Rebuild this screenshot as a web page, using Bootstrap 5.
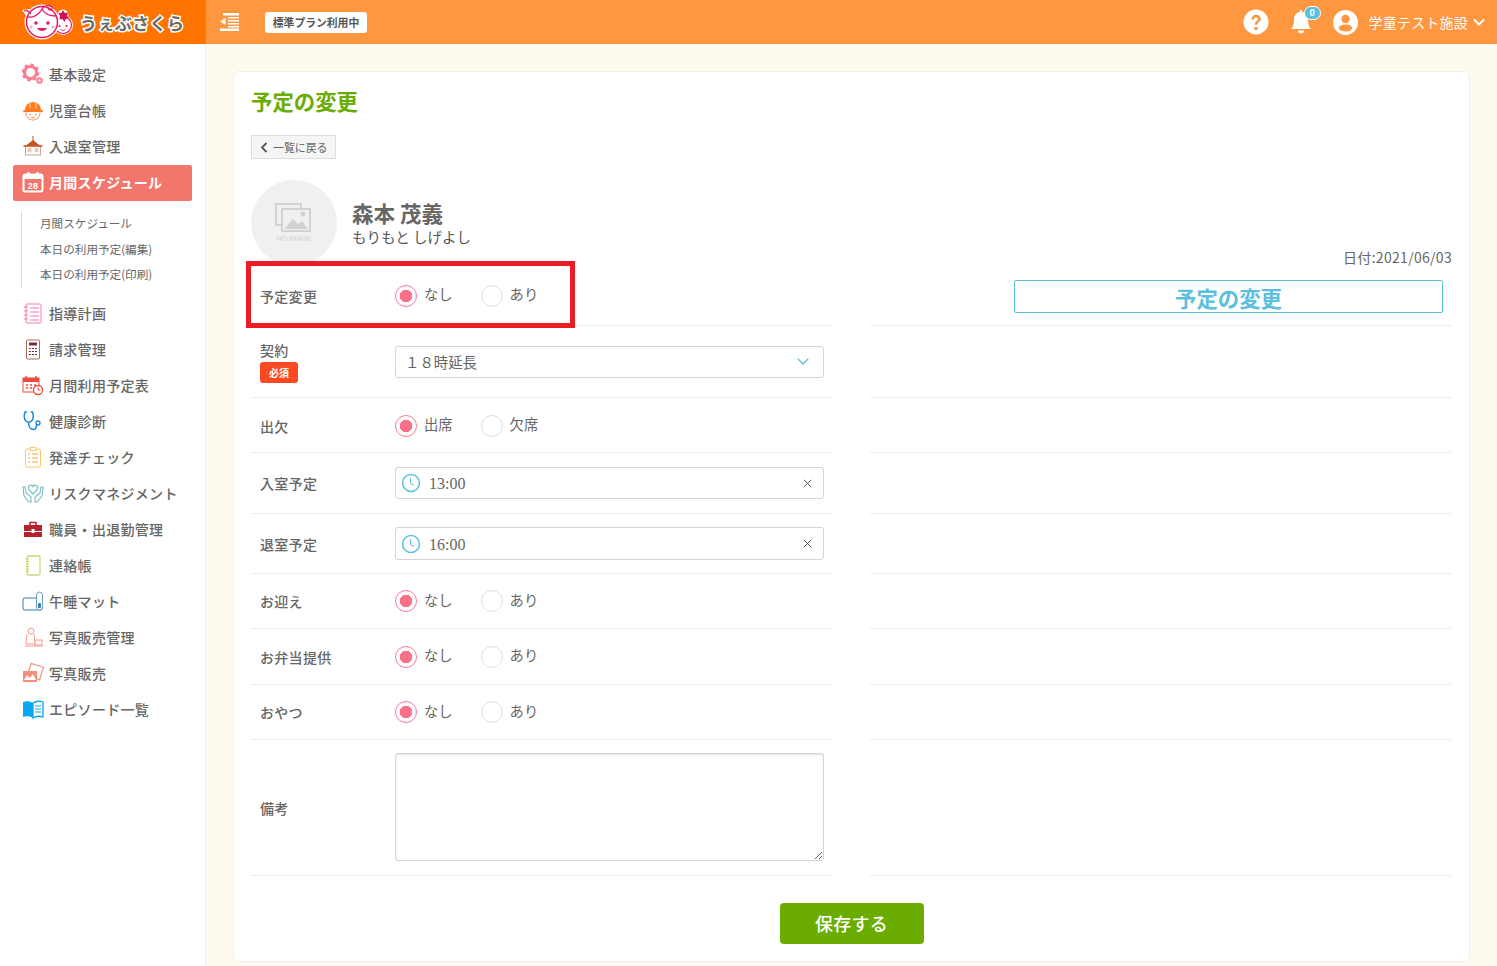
<!DOCTYPE html>
<html lang="ja">
<head>
<meta charset="utf-8">
<title>予定の変更</title>
<link href="https://cdn.jsdelivr.net/npm/bootstrap@5.3.0/dist/css/bootstrap.min.css" rel="stylesheet">
<style>
html,body{height:966px;overflow:hidden}
body{font-family:"Noto Sans CJK JP","Noto Sans",sans-serif;color:#666;background:#fffaf0;font-size:14px}
.app-top{height:44px;background:#ff9640}
.logo-box{width:206px;height:44px;background:#ff7300;padding-left:21px;gap:5px;flex:none}
.logo-text{color:#6b6b6b;font-size:17px;font-weight:700;letter-spacing:.4px;-webkit-text-stroke:3px #fff;paint-order:stroke fill;line-height:1}
.menu-tog{margin-left:14px;margin-right:26px;line-height:0}
.plan-tag{background:#fff;color:#555;font-size:10.800px;font-weight:700;border-radius:3px;height:21px;width:102px;line-height:21px;text-align:center;white-space:nowrap}
.top-user{color:#fff;font-size:14px;letter-spacing:.2px;margin-right:12px}
.bell-wrap{position:relative;width:24px;height:26px;margin:0 19px 0 21px}
.bell-num{position:absolute;left:14px;top:-3px;width:17px;height:14px;border-radius:7px;background:#5bc0de;border:1px solid #fff;color:#fff;font-size:9px;line-height:12px;text-align:center;font-weight:700;letter-spacing:0}
.user-ic{margin-right:11px}
.chev-ic{margin-left:5px}
.app-main{height:922px}
.side-nav{width:206px;background:#fff;border-right:1px solid #eee;padding:12px 13px 0 13px;flex:none}
.side-item{height:36px;color:#666;font-size:14px;letter-spacing:.3px;font-weight:500;gap:5px;padding-left:9px;white-space:nowrap}
.side-item svg{width:22px;height:22px;flex:none}
.side-item.is-on{background:#f2766b;color:#fff;font-weight:700;border-radius:2px;margin-top:1px;margin-bottom:-1px;padding-bottom:2px}
.side-sub{margin:11px 0 7px 8px;border-left:1px solid #ddd;padding-left:18px;font-size:11.600px;color:#666;height:77px}
.side-sub div{height:25.500px;line-height:25.500px;white-space:nowrap}
.body-wrap{padding:27px 27px 0 27px}
.sheet{background:#fff;border:1px solid #f3efe8;border-radius:6px;height:891px;padding:0 17px;position:relative}
.sheet-title{color:#6aad00;font-size:21.400px;font-weight:700;line-height:30px;margin:14px 0 19px;height:30px}
.back-btn{width:85px;height:24px;background:#f5f5f5;border:1px solid #ddd;color:#666;font-size:10.900px;gap:5px;padding-left:8px;line-height:1}
.face-row{height:86px;margin-top:21px;gap:15px}
.face{width:86px;height:86px;border-radius:50%;background:#f0f0f0;flex:none}
.pname{font-size:21.500px;font-weight:700;line-height:26px;color:#666;margin-bottom:2px}
.pkana{font-size:14.500px;line-height:18px;color:#555}
.date-line{font-size:14px;letter-spacing:.3px;text-align:right;height:24px;line-height:21px;margin-top:-19px;color:#666}
.rows{column-gap:37px;display:grid;grid-template-columns:582px 582px}
.rowc{border-bottom:1px solid #eee}
.lbl{width:144px;padding-left:9px;flex:none;font-size:14px;letter-spacing:.3px;color:#666;font-weight:500;line-height:18px}
.h55{height:55px}.h72{height:72px}.h61{height:61px}.h60{height:60px}.h56{height:56px}.h136{height:136px}
.pb-up{padding-bottom:5px}.pt-dn{padding-top:1px}
.req{display:block;background:#fa4a23;color:#fff;font-size:10px;font-weight:700;width:38px;height:21px;line-height:21px;text-align:center;border-radius:3px;margin-top:3px;letter-spacing:0}
.rad{gap:7px;margin-right:28px;line-height:1;font-size:14.300px}
.rad i{display:block;width:22px;height:22px;border-radius:50%;border:1px solid #ddd;background:#fff}
.rad.on i{border-color:#fb7b93;background:radial-gradient(circle,#fb7089 0 6px,#fff 6.500px)}
.rad span{padding-bottom:2px}
.fld{width:429px;height:32px;border:1px solid #d5d5d5;border-radius:3px;background:#fff}
.fld.tall{height:33px}
.sel-txt{padding-left:9px;font-size:14.400px;color:#666}
.clock-ic{margin-left:5px;flex:none}
.x-ic{margin-left:auto;margin-right:11px}
.time-txt{font-family:"Liberation Serif",serif;font-size:16px;color:#666;margin-left:8px;padding-top:2px}
.memo{width:429px;height:108px;border:1px solid #d5d5d5;border-radius:3px;resize:both;display:block;outline:0;box-shadow:inset 0 1px 2px rgba(0,0,0,.12);margin-bottom:2px}
.title-box{width:429px;height:33px;margin-left:144px;border:1px solid #5bc0de;border-radius:2px;color:#5bc0de;font-size:21.400px;font-weight:700;text-align:center;line-height:33px;margin-top:-3px}
.save-wrap{padding-top:27px}
.save-btn{width:144px;height:41px;background:#6aad00;color:#fff;font-size:18px;font-weight:500;border:0;border-radius:4px;line-height:41px;padding:0;letter-spacing:.3px}
.save-btn:hover{background:#6aad00;color:#fff}
.chev-sel{margin-right:14px;flex:none}
.red-mark{position:absolute;left:12px;top:189px;width:329px;height:67px;border:5px solid #ed1c24;pointer-events:none}
</style>
</head>
<body>
<header class="app-top d-flex align-items-center">
  <div class="logo-box d-flex align-items-center">
    <svg width="54" height="40" viewBox="0 0 54 40" class="flex-none">
      <circle cx="42" cy="23" r="10" fill="#fff"/>
      <circle cx="42" cy="23" r="8.500" fill="#fff" stroke="#e5186a" stroke-width="1.200"/>
      <circle cx="42" cy="13" r="5.500" fill="#fff"/>
      <path d="M42 8l1.700 2.900 3.300-.4-1 3.200 2 2.600-3.300.6-1.200 3-1.900-2.700-3.300.1.800-3.200-1.800-2.800 3.200-.5z" fill="#cf1450"/>
      <circle cx="21" cy="20" r="17.500" fill="#fff"/>
      <path d="M1 8l8-1 2 6-5 2z" fill="#fff"/>
      <circle cx="21" cy="20" r="15.500" fill="#fff" stroke="#e5186a" stroke-width="1.500"/>
      <path d="M6 15c6 1 12-2 15-8 2 4 7 7 14 7M3 9c3-1 5 0 7 3M21 7c3-5 11-4 10 0-1 2-4 1-4-1" fill="none" stroke="#e5186a" stroke-width="1.300"/>
      <circle cx="15" cy="21" r="1.800" fill="#e5186a"/><circle cx="27" cy="21" r="1.800" fill="#e5186a"/>
      <circle cx="10" cy="25" r="1.500" fill="#f7a8c4"/><circle cx="32" cy="25" r="1.500" fill="#f7a8c4"/>
      <path d="M16 26c2 4 8 4 10 0z" fill="#e5186a"/>
      <circle cx="38.500" cy="24" r="1.100" fill="#e5186a"/><circle cx="45.500" cy="24" r="1.100" fill="#e5186a"/>
      <path d="M39.500 27c1.500 2 3.500 2 5 0" fill="none" stroke="#e5186a"/>
    </svg>
    <span class="logo-text">うぇぶさくら</span>
  </div>
  <span class="menu-tog"><svg width="19" height="18" viewBox="0 0 19 18" fill="#fff"><rect y="0" x="3" width="16" height="2.500"/><rect x="8" y="4" width="11" height="1.500"/><rect x="8" y="7" width="11" height="1.500"/><rect x="8" y="10" width="11" height="1.500"/><rect x="8" y="13" width="11" height="1.500"/><rect x="0" y="15.500" width="19" height="2.500"/><path d="M5.500 5v7L0 8.500z"/></svg></span>
  <span class="plan-tag">標準プラン利用中</span>
  <span class="ms-auto d-flex align-items-center top-user">
    <svg width="26" height="26" viewBox="0 0 26 26"><circle cx="13" cy="13" r="12.500" fill="#fff"/><path d="M8.500 10.500c0-3 2-4.800 4.700-4.800s4.500 1.700 4.500 4.100c0 3.300-3.300 3.300-3.300 6h-2.600c0-4 3.100-3.800 3.100-5.900 0-1-.7-1.700-1.700-1.700s-1.900.8-2 2.300z" fill="#ff9640"/><circle cx="13" cy="19.500" r="1.800" fill="#ff9640"/></svg>
    <span class="bell-wrap"><svg width="24" height="26" viewBox="0 0 24 26" fill="#fff"><path d="M10 1h2v2c4 .6 6 3.500 6 7.500 0 5 1 7.500 3 9.500H1c2-2 3-4.500 3-9.500 0-4 2-6.900 6-7.500z"/><path d="M8 21.500h6c0 2-1.200 3-3 3s-3-1-3-3z"/></svg><span class="bell-num">0</span></span>
    <svg width="25" height="25" viewBox="0 0 25 25" class="flex-none user-ic"><circle cx="12.500" cy="12.500" r="12.500" fill="#fff"/><circle cx="12.500" cy="9" r="4.200" fill="#ff9640"/><ellipse cx="12.500" cy="18" rx="6.800" ry="3.500" fill="#ff9640"/></svg>
    <span>学童テスト施設</span>
    <svg width="12" height="8" viewBox="0 0 12 8" class="chev-ic"><path d="M1 1.500l5 5 5-5" fill="none" stroke="#fff" stroke-width="2"/></svg>
  </span>
</header>
<div class="app-main d-flex">
  <nav class="side-nav">
    <div class="side-item d-flex align-items-center"><svg viewBox="0 0 22 22"><circle cx="8.500" cy="9.500" r="6" fill="none" stroke="#fb7b93" stroke-width="3"/><circle cx="8.500" cy="9.500" r="7.700" fill="none" stroke="#fb7b93" stroke-width="2.400" stroke-dasharray="3.200 2.800"/><circle cx="17.500" cy="17.500" r="2.300" fill="none" stroke="#fb7b93" stroke-width="2"/></svg>基本設定</div>
    <div class="side-item d-flex align-items-center"><svg viewBox="0 0 22 22"><path d="M3 11a8 8 0 0 1 16 0z" fill="#ff7d1e"/><rect x="1" y="11" width="20" height="2" rx="1" fill="#ff7d1e"/><path d="M8 3.500v6M14 3.500v6" stroke="#fff" stroke-width=".7"/><path d="M4 13c0 5 3 8 7 8s7-3 7-8" fill="#fff" stroke="#ff8c4a"/><path d="M7 15.500h2M13 15.500h2M9 18c1 1 3 1 4 0" stroke="#ff8c4a" fill="none"/></svg>児童台帳</div>
    <div class="side-item d-flex align-items-center"><svg viewBox="0 0 22 22"><path d="M11 1v5" stroke="#c8501e"/><path d="M3 11l3-2 5-4 5 4 3 2z" fill="#c8501e"/><rect x="3.500" y="11" width="15" height="9" fill="#fff" stroke="#c9a79a"/><path d="M1.500 11h19" stroke="#c8501e" stroke-width="1.500"/><rect x="5.500" y="13" width="4" height="4" fill="#f2c8b8"/><rect x="12.500" y="13" width="4" height="4" fill="#f2c8b8"/></svg>入退室管理</div>
    <div class="side-item is-on d-flex align-items-center"><svg viewBox="0 0 22 22"><rect x="1.500" y="3.500" width="19" height="17" rx="2" fill="none" stroke="#fff" stroke-width="2"/><rect x="2" y="4" width="18" height="4" fill="#fff"/><rect x="5.500" y="1" width="2" height="5" fill="#fff"/><rect x="14.500" y="1" width="2" height="5" fill="#fff"/><text x="11" y="18" text-anchor="middle" font-size="9" font-weight="700" fill="#fff" font-family="Liberation Sans">28</text></svg>月間スケジュール</div>
    <div class="side-sub"><div>月間スケジュール</div><div>本日の利用予定(編集)</div><div>本日の利用予定(印刷)</div></div>
    <div class="side-item d-flex align-items-center"><svg viewBox="0 0 22 22"><rect x="4" y="2" width="15" height="19" rx="1" fill="#fff" stroke="#fb7bb0"/><path d="M2 5h4M2 9h4M2 13h4M2 17h4M8 6h9M8 10h9M8 14h9M8 18h9" stroke="#fb7bb0"/></svg>指導計画</div>
    <div class="side-item d-flex align-items-center"><svg viewBox="0 0 22 22"><rect x="4.500" y="2" width="13" height="19" rx="1" fill="#fff" stroke="#a86f5c"/><rect x="7" y="4.500" width="8" height="3" fill="#7d2a45"/><path d="M7 10.500h2M10 10.500h2M13 10.500h2M7 13.500h2M10 13.500h2M13 13.500h2M7 16.500h2M10 16.500h2M13 16.500h2" stroke="#7d2a45"/></svg>請求管理</div>
    <div class="side-item d-flex align-items-center"><svg viewBox="0 0 22 22"><rect x="1" y="4" width="16" height="14" fill="#fff" stroke="#ef4b3c"/><rect x="1" y="4" width="16" height="4" fill="#ef4b3c"/><path d="M4 2v3M14 2v3M4 11h2M8 11h2M12 11h2M4 14h2M8 14h2" stroke="#ef4b3c" stroke-width="1.500"/><circle cx="16" cy="16" r="4.500" fill="#fff" stroke="#ef4b3c" stroke-width="1.300"/><path d="M16 13.500V16h2.500" fill="none" stroke="#ef4b3c"/></svg>月間利用予定表</div>
    <div class="side-item d-flex align-items-center"><svg viewBox="0 0 22 22"><path d="M5 2H3c-1 3-1 7 1 9 1.500 1.500 4 1.500 5.500 0 2-2 2-6 1-9H8.500M6.500 12.500c0 4 2 7 5 7s3-3 3-5" fill="none" stroke="#1e88d2" stroke-width="1.500"/><circle cx="16" cy="13" r="2" fill="none" stroke="#1e88d2" stroke-width="1.300"/></svg>健康診断</div>
    <div class="side-item d-flex align-items-center"><svg viewBox="0 0 22 22"><rect x="3.500" y="3" width="15" height="18" rx="1.500" fill="#fff" stroke="#ffc864"/><rect x="8" y="1.500" width="6" height="3" fill="#fff" stroke="#ffc864"/><path d="M6 8h2M10 8h6M6 12h2M10 12h6M6 16h2M10 16h6" stroke="#f0a63c"/></svg>発達チェック</div>
    <div class="side-item d-flex align-items-center"><svg viewBox="0 0 22 22"><path d="M11 12C8 9 6.500 8 6.500 6A2.300 2.300 0 0 1 11 5a2.300 2.300 0 0 1 4.500 1c0 2-1.500 3-4.500 6z" fill="none" stroke="#6fc8b4" stroke-width="1.200"/><path d="M1 5l1 9 5 6h2v-5l-5-4-1-6zM21 5l-1 9-5 6h-2v-5l5-4 1-6z" fill="#fff" stroke="#7ab9c9" stroke-width="1.100"/></svg>リスクマネジメント</div>
    <div class="side-item d-flex align-items-center"><svg viewBox="0 0 22 22"><path d="M8 7V4.500h6V7" fill="none" stroke="#b5202a" stroke-width="1.500"/><rect x="2" y="7" width="18" height="6" fill="#b5202a"/><rect x="2" y="14" width="18" height="5" fill="#b5202a"/><rect x="9.500" y="11" width="3" height="4" fill="#fff"/></svg>職員・出退勤管理</div>
    <div class="side-item d-flex align-items-center"><svg viewBox="0 0 22 22"><rect x="5" y="2" width="13" height="19" rx="1.500" fill="#fff" stroke="#c5dc78" stroke-width="1.300"/><path d="M4 5h3M4 7.500h3M4 10h3M4 12.500h3M4 15h3M4 17.500h3" stroke="#c5dc78"/></svg>連絡帳</div>
    <div class="side-item d-flex align-items-center"><svg viewBox="0 0 22 22"><rect x="1" y="8" width="19" height="12" rx="1" fill="#fff" stroke="#3a7fb0"/><rect x="14.500" y="2" width="6" height="18" rx="3" fill="#fff" stroke="#6a9fbf"/><rect x="16" y="13" width="3" height="5" rx="1" fill="#3a7fb0"/></svg>午睡マット</div>
    <div class="side-item d-flex align-items-center"><svg viewBox="0 0 22 22" fill="none" stroke="#f59a8c"><circle cx="9" cy="5" r="3"/><path d="M5 8l-1 10h9l-1-10M3 20h18"/><rect x="13" y="14" width="7" height="5" fill="#fff"/></svg>写真販売管理</div>
    <div class="side-item d-flex align-items-center"><svg viewBox="0 0 22 22"><rect x="7" y="3" width="13" height="13" fill="#fff" stroke="#f59a8c" stroke-width="1.300" transform="rotate(18 13 9)"/><rect x="1" y="9" width="14" height="11" fill="#f58f78"/><path d="M2 18l3-5 3 3 3-4 3 6z" fill="#fff"/></svg>写真販売</div>
    <div class="side-item d-flex align-items-center"><svg viewBox="0 0 22 22"><path d="M1 4c3-1 7-1 10 1v15c-3-2-7-2-10-1z" fill="#0aa8ef"/><path d="M21 4c-3-1-7-1-10 1v15c3-2 7-2 10-1z" fill="#fff" stroke="#0aa8ef" stroke-width="1.300"/><path d="M13 8h6M13 11h6M13 14h6" stroke="#0aa8ef"/></svg>エピソード一覧</div>
  </nav>
  <main class="body-wrap flex-grow-1">
    <section class="sheet">
      <h1 class="sheet-title">予定の変更</h1>
      <div class="back-btn d-flex align-items-center"><svg width="8" height="11" viewBox="0 0 8 11"><path d="M6.500 1L2 5.500 6.500 10" fill="none" stroke="#555" stroke-width="1.800"/></svg><span>一覧に戻る</span></div>
      <div class="face-row d-flex align-items-center">
        <div class="face d-flex align-items-center justify-content-center">
          <svg width="42" height="44" viewBox="0 0 42 44"><rect x="3" y="3" width="25" height="21" fill="none" stroke="#d2d2d2" stroke-width="2"/><rect x="9" y="8" width="28" height="22" fill="#f0f0f0" stroke="#d2d2d2" stroke-width="2"/><path d="M11 28l9-10 5 5 4-3 6 8z" fill="#d2d2d2"/><circle cx="30" cy="13" r="2.500" fill="#d2d2d2"/><text x="21" y="40" text-anchor="middle" font-size="7" fill="#d2d2d2" font-family="Liberation Sans">NO IMAGE</text></svg>
        </div>
        <div><div class="pname">森本 茂義</div><div class="pkana">もりもと しげよし</div></div>
      </div>
      <div class="date-line">日付:2021/06/03</div>
      <div class="rows">
        <div class="rowc h55 pb-up d-flex align-items-center"><div class="lbl">予定変更</div><label class="rad on d-flex align-items-center"><i></i><span>なし</span></label><label class="rad d-flex align-items-center"><i></i><span>あり</span></label></div>
        <div class="rowc h55 d-flex align-items-center"><div class="title-box">予定の変更</div></div>

        <div class="rowc h72 d-flex align-items-center"><div class="lbl">契約<span class="req">必須</span></div><div class="fld d-flex align-items-center justify-content-between"><span class="sel-txt">１８時延長</span><svg width="12" height="7" viewBox="0 0 12 7" class="chev-sel"><path d="M.8.800L6 6l5.200-5.200" fill="none" stroke="#5bc0de" stroke-width="1.300"/></svg></div></div>
        <div class="rowc h72"></div>

        <div class="rowc h55 pt-dn d-flex align-items-center"><div class="lbl">出欠</div><label class="rad on d-flex align-items-center"><i></i><span>出席</span></label><label class="rad d-flex align-items-center"><i></i><span>欠席</span></label></div>
        <div class="rowc h55"></div>

        <div class="rowc h61 d-flex align-items-center"><div class="lbl">入室予定</div><div class="fld d-flex align-items-center"><svg width="20" height="20" viewBox="0 0 20 20" class="clock-ic"><circle cx="10" cy="10" r="8.500" fill="none" stroke="#5bc0de" stroke-width="1.500"/><path d="M9.500 5v5.500l3.500 2" fill="none" stroke="#5bc0de"/></svg><span class="time-txt">13:00</span><svg width="9" height="9" viewBox="0 0 9 9" class="x-ic"><path d="M.8.800l7.400 7.400M8.200.800L.8 8.200" stroke="#555"/></svg></div></div>
        <div class="rowc h61"></div>

        <div class="rowc h60 d-flex align-items-center"><div class="lbl">退室予定</div><div class="fld tall d-flex align-items-center"><svg width="20" height="20" viewBox="0 0 20 20" class="clock-ic"><circle cx="10" cy="10" r="8.500" fill="none" stroke="#5bc0de" stroke-width="1.500"/><path d="M9.500 5v5.500l3.500 2" fill="none" stroke="#5bc0de"/></svg><span class="time-txt">16:00</span><svg width="9" height="9" viewBox="0 0 9 9" class="x-ic"><path d="M.8.800l7.400 7.400M8.200.800L.8 8.200" stroke="#555"/></svg></div></div>
        <div class="rowc h60"></div>

        <div class="rowc h55 d-flex align-items-center"><div class="lbl">お迎え</div><label class="rad on d-flex align-items-center"><i></i><span>なし</span></label><label class="rad d-flex align-items-center"><i></i><span>あり</span></label></div>
        <div class="rowc h55"></div>

        <div class="rowc h56 d-flex align-items-center"><div class="lbl">お弁当提供</div><label class="rad on d-flex align-items-center"><i></i><span>なし</span></label><label class="rad d-flex align-items-center"><i></i><span>あり</span></label></div>
        <div class="rowc h56"></div>

        <div class="rowc h55 d-flex align-items-center"><div class="lbl">おやつ</div><label class="rad on d-flex align-items-center"><i></i><span>なし</span></label><label class="rad d-flex align-items-center"><i></i><span>あり</span></label></div>
        <div class="rowc h55"></div>

        <div class="rowc h136 d-flex align-items-center"><div class="lbl">備考</div><textarea class="memo"></textarea></div>
        <div class="rowc h136"></div>
      </div>
      <div class="save-wrap text-center"><button class="btn save-btn">保存する</button></div>
      <div class="red-mark"></div>
    </section>
  </main>
</div>
<script src="https://cdn.jsdelivr.net/npm/bootstrap@5.3.0/dist/js/bootstrap.bundle.min.js"></script>
</body>
</html>
